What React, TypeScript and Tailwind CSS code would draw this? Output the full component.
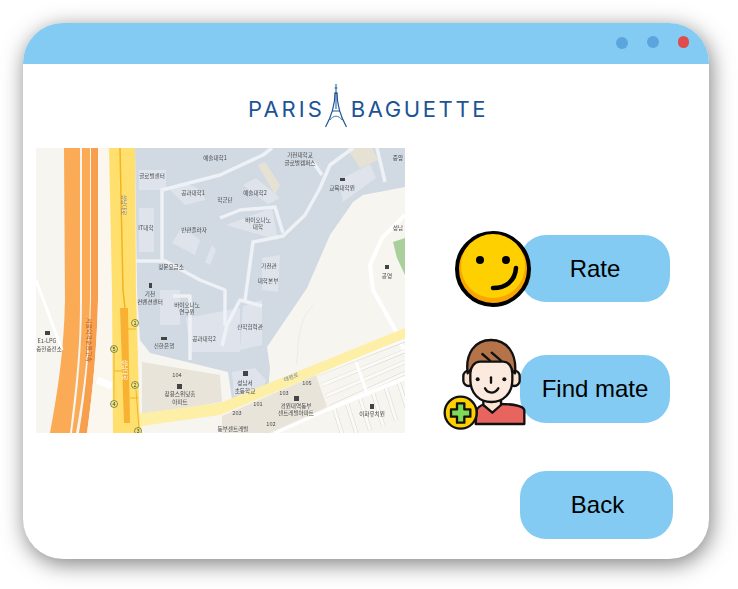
import { FC } from "react"

const labels: [number, number, string][] = [
  [215, 160, "예술대학1"], [300, 157, "가천대학교"], [300, 165, "글로벌캠퍼스"], [398, 160, "중앙"],
  [152, 178, "글로벌센터"], [193, 195, "공과대학1"], [255, 195, "예술대학2"], [225, 202, "학군단"],
  [342, 190, "교육대학원"], [258, 222, "바이오나노"], [258, 229, "대학"], [146, 230, "IT대학"],
  [194, 232, "반관플라자"], [171, 269, "정문요금소"], [269, 268, "가천관"], [268, 283, "대학본부"],
  [398, 230, "성남"], [387, 278, "공영"], [150, 296, "기천"], [150, 304, "컨벤션센터"],
  [187, 307, "바이오나노"], [187, 314, "연구원"], [164, 348, "신한은행"], [204, 341, "공과대학2"],
  [250, 329, "산학협력관"], [47, 343, "E1-LPG"], [49, 351, "충현충전소"], [245, 385, "성남서"],
  [245, 393, "초등학교"], [177, 377, "104"], [372, 416, "이화유치원"], [296, 408, "경원대역동부"],
  [296, 415, "센트레빌아파트"], [233, 431, "동부센트레빌"], [180, 396, "창용스위닷홈"], [180, 404, "아파트"],
  [284, 395, "103"], [307, 385, "105"], [258, 406, "101"], [271, 426, "102"], [237, 415, "203"],
]

const exits: [number, number, string][] = [
  [135, 323, "1"], [114, 349, "5"], [135, 385, "2"], [114, 404, "4"], [138, 431, "3"],
]

const CampusMap: FC = () => (
  <svg viewBox="36 148 369 285" className="h-[285px] w-[369px] shrink-0 blur-[0.3px]">
    <rect x="36" y="148" width="369" height="285" fill="#f7f5f0" />
    {/* campus */}
    <path d="M135 148H405V187L363 195L353 202L330 235L307 288L267 347L270 368L268 392L232 400L228 372L150 353L140 340L137 290Z" fill="#d1d9e3" />
    {/* apartments */}
    <path d="M142 362L220 375L222 402L150 414L142 414Z" fill="#e8e4da" />
    <path d="M222 416L316 375L327 407L270 433H222Z" fill="#e8e4da" />
    {/* buildings */}
    <g fill="#dfe4ec">
      <path d="M139 170H166V190H139Z" />
      <path d="M139 208H154V252H139Z" />
      <path d="M170 190C185 180 200 185 205 200L185 205Z" />
      <path d="M172 243L182 227L200 240L195 255Z" />
      <path d="M205 262L212 245L216 250L210 265Z" />
      <path d="M243 185L256 178L280 198L268 204Z" />
      <path d="M226 225L272 208L278 240L250 232Z" />
      <path d="M339 180L370 164L376 178L343 202Z" />
      <path d="M262 258L280 255L278 292L262 290Z" />
      <path d="M243 306L262 300L262 345L240 350Z" />
      <path d="M160 290H180V325H160Z" />
      <path d="M186 318L240 308V352L190 352Z" />
      <path d="M232 372L255 368L266 380L262 392L234 396Z" />
    </g>
    <path d="M258 165L275 195L280 185L265 162Z" fill="#e6e2d3" />
    <path d="M347 148L372 148L378 160L360 168Z" fill="#e6e2d3" />
    {/* campus roads */}
    <g fill="none" stroke="#eef1f5" strokeWidth="3.5" strokeLinejoin="round">
      <path d="M162 262V190L220 175L263 155L272 148" />
      <path d="M136 261H165L200 280L225 290V326" />
      <path d="M220 218L240 210L275 207L283 233" />
      <path d="M245 300L253 242L283 236L305 215L320 188L330 165L353 148" />
      <path d="M313 162L322 175" />
      <path d="M377 148L385 182" />
      <path d="M222 346L227 325L240 300L262 306" />
      <path d="M173 296H190V360" />
    </g>
    {/* park and right side roads */}
    <path d="M393 242L405 238V275L397 258Z" fill="#a9cf9b" />
    <path d="M405 215L382 238L370 265L373 290L397 333L405 353" fill="none" stroke="#fff" strokeWidth="4" />
    <path d="M313 305C295 325 300 345 296 365" fill="none" stroke="#eeebe2" strokeWidth="1" />
    {/* residential blocks */}
    <g fill="none" stroke="#d8d6cf" strokeWidth="4">
      {[0, 1, 2, 3].map((n) => (
        <path key={n} d={`M${318 + n * 4} ${374 + n * 11}L405 ${340 + n * 11}`} />
      ))}
      {[0, 1, 2, 3, 4, 5, 6].map((n) => (
        <path key={n} d={`M${333 + n * 13} ${405 - n * 5}L${344 + n * 13} ${440 - n * 5}`} />
      ))}
    </g>
    <g fill="none" stroke="#fbfaf7" strokeWidth="3">
      {[0, 1, 2, 3].map((n) => (
        <path key={n} d={`M${318 + n * 4} ${374 + n * 11}L405 ${340 + n * 11}`} />
      ))}
      {[0, 1, 2, 3, 4, 5, 6].map((n) => (
        <path key={n} d={`M${333 + n * 13} ${405 - n * 5}L${344 + n * 13} ${440 - n * 5}`} />
      ))}
    </g>
    <path d="M327 410L405 378" stroke="#fff" strokeWidth="4" />
    <path d="M356 362L368 396" stroke="#fff" strokeWidth="3" />
    <path d="M275 433L327 410" stroke="#fff" strokeWidth="3" />
    {/* expressway */}
    <path d="M64 148H80V300C80 340 78 370 70 433H50C58 390 64 350 65 300Z" fill="#fbaa55" />
    <path d="M82 148H90V300C89 345 84 390 76 433H72C78 390 82 345 82 300Z" fill="#fbaa55" />
    <path d="M91 148H98V300C97 345 93 390 87 433H79C86 390 90 345 91 300Z" fill="#f79f4d" />
    <path d="M98 148H109L112 290L113 433H87C93 390 97 345 98 300Z" fill="#fbf7ee" />
    <path d="M36 280L62 350" stroke="#fff" strokeWidth="3" fill="none" />
    <path d="M97 380L112 386" stroke="#fff" strokeWidth="7" />
    {/* main road */}
    <path d="M136 414L220 403L405 328V338L220 415L142 426V433H136Z" fill="#fdf0a6" />
    <path d="M109 148H135L136 290L140 433H113L112 290Z" fill="#ffe06e" />
    <path d="M120 148L123 290L125 308" fill="none" stroke="#f5b21f" strokeWidth="1.5" />
    <path d="M120 308H128L130 423H124Z" fill="#f8b133" />
    <g fill="none" stroke="#f5b21f" strokeWidth="1">
      <path d="M128 329H136" />
      <path d="M114 353V400" />
      <path d="M114 371H122" />
      <path d="M130 398H138" />
      <path d="M136 390L139 428" />
    </g>
    {exits.map(([x, y, t]) => (
      <g key={t}>
        <circle cx={x} cy={y} r="3.5" fill="#f3ea7c" stroke="#5d5a30" strokeWidth="0.7" />
        <text x={x} y={y + 2} textAnchor="middle" fontSize="5.5" fill="#333" fontFamily="'Liberation Sans', sans-serif">{t}</text>
      </g>
    ))}
    <g fontFamily="'Noto Sans CJK KR', sans-serif" fontSize="5.6" fill="#4a4a4a" textAnchor="middle">
      {labels.map(([x, y, t]) => (
        <text key={`${x}-${y}`} x={x} y={y}>{t}</text>
      ))}
      <text x="292" y="379" transform="rotate(-22 292 379)" fill="#7187a8">태평로</text>
      <text x="87" y="340" transform="rotate(90 87 340)" fill="#b45a1c" fontSize="6">서울외곽순환고속</text>
      <text x="122" y="205" transform="rotate(90 122 205)" fill="#7a7fa8">성남대로</text>
      <text x="123" y="370" transform="rotate(90 123 370)" fill="#fff">성남대로</text>
    </g>
    <g fill="#444">
      <rect x="161" y="337" width="6" height="3" />
      <rect x="177" y="384" width="5" height="5" />
      <rect x="294" y="396" width="5" height="5" />
      <rect x="370" y="404" width="4" height="5" />
      <rect x="243" y="371" width="5" height="5" />
      <rect x="45" y="331" width="5" height="4" />
      <rect x="149" y="283" width="3" height="5" />
      <rect x="340" y="178" width="5" height="3" />
      <rect x="385" y="265" width="4" height="4" />
    </g>
  </svg>
)

const Smiley: FC = () => (
  <svg viewBox="0 0 80 80" className="h-[80px] w-[80px]">
    <circle cx="40" cy="40" r="36" fill="#f9a602" stroke="#000" strokeWidth="4" />
    <circle cx="40" cy="37" r="32" fill="#ffd000" />
    <circle cx="27" cy="31" r="4" fill="#000" />
    <circle cx="53" cy="31" r="4" fill="#000" />
    <path d="M40 59C53 59 62 52 63 39" fill="none" stroke="#000" strokeWidth="4.5" strokeLinecap="round" />
  </svg>
)

const Mate: FC = () => (
  <svg viewBox="0 0 330 315" className="h-[105px] w-[110px]">
    <g stroke="#111" strokeWidth="7" strokeLinejoin="round" strokeLinecap="round">
      <path d="M125 240C130 228 145 224 150 222L195 222C210 222 262 222 268 240V282H122Z" fill="#e8645f" />
      <path d="M145 210V225L172 248L198 225V210Z" fill="#fde3d2" />
      <rect x="85" y="122" width="32" height="46" rx="16" fill="#fde3d2" />
      <rect x="222" y="122" width="32" height="46" rx="16" fill="#fde3d2" />
      <path d="M98 130C90 70 120 30 168 30C216 30 246 70 240 130L210 100H125Z" fill="#b5734a" />
      <path d="M106 150V130C106 112 118 95 135 95H205C222 95 232 112 232 130V150C232 190 205 216 169 216C133 216 106 190 106 150Z" fill="#fdeadf" />
      <path d="M142 72L165 92" fill="none" />
      <path d="M170 68L198 92" fill="none" />
      <path d="M168 142V158" fill="none" />
      <path d="M150 175C158 192 180 192 190 175" fill="none" />
      <circle cx="77" cy="248" r="48" fill="#ffd000" />
      <path d="M66 220H88V238H106V260H88V278H66V260H48V238H66Z" fill="#7ed957" />
    </g>
    <circle cx="128" cy="148" r="6" fill="#111" />
    <circle cx="208" cy="148" r="6" fill="#111" />
  </svg>
)

const Tower: FC = () => (
  <svg viewBox="0 0 22 44" className="h-[44px] w-[22px]">
    <g fill="none" stroke="#1c5496">
      <path d="M11 0V9" strokeWidth="1" />
      <path d="M9.6 4H12.4" strokeWidth="1" />
      <path d="M9.5 9H12.5" strokeWidth="1.5" />
      <path d="M10 9C10 20 6 33 0.5 43" strokeWidth="1.2" />
      <path d="M12 9C12 20 16 33 21.5 43" strokeWidth="1.2" />
      <path d="M11 9V25" strokeWidth="1" />
      <path d="M7 27H15" strokeWidth="1" />
      <path d="M5 36C8 31 14 31 17 36" strokeWidth="0.8" />
    </g>
  </svg>
)

const btn = "flex items-center justify-center rounded-[26px] bg-[#83cbf3] text-[24px] text-black"

export default function App() {
  return (
    <div className="h-[589px] w-[738px] overflow-hidden bg-white pl-[23px] pt-[23px] font-['Liberation_Sans',sans-serif]">
      <div className="h-[536px] w-[686px] rounded-[40px] bg-white shadow-[2px_5px_22px_rgba(0,0,0,0.5)]">
        {/* window bar */}
        <div className="flex h-[41px] items-center justify-end gap-[19px] rounded-t-[40px] bg-[#83cbf3] pb-[3px] pr-[20px]">
          <span className="mt-[2px] h-3 w-3 rounded-full bg-[#5aa5dd]" />
          <span className="h-3 w-3 rounded-full bg-[#5aa5dd]" />
          <span className="h-3 w-[11px] rounded-full bg-[#e04b4b]" />
        </div>

        {/* logo */}
        <div className="flex items-end justify-center pl-[4px] pt-[20px] font-['Inter',sans-serif] text-[22px] font-normal leading-none text-[#1c5496]">
          <span className="mb-[8px] tracking-[3px]">PARIS</span>
          <Tower />
          <span className="mb-[8px] ml-[4px] tracking-[2.6px]">BAGUETTE</span>
        </div>

        <div className="mt-[20px] flex pl-[13px]">
          <CampusMap />
          <div className="ml-[115px] flex flex-col pt-[87px]">
            <div className={`relative h-[67px] w-[150px] ${btn}`}>
              Rate
              <span className="absolute left-[-67px] top-[-6px]"><Smiley /></span>
            </div>
            <div className={`relative mt-[53px] h-[68px] w-[150px] ${btn}`}>
              Find mate
              <span className="absolute left-[-85px] top-[-25px]"><Mate /></span>
            </div>
            <div className={`mt-[48px] h-[68px] w-[153px] pl-[2px] ${btn}`}>Back</div>
          </div>
        </div>
      </div>
    </div>
  )
}
